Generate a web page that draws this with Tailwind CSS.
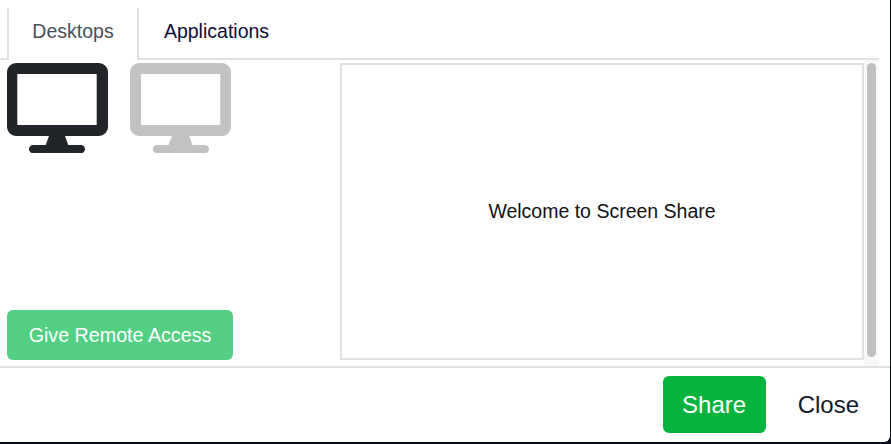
<!DOCTYPE html>
<html lang="en">
<head>
    <meta charset="UTF-8">
    <title>Screen Share</title>
    <script src="https://cdn.jsdelivr.net/npm/@tailwindcss/browser@4"></script>
</head>
<body class="bg-white">
    <div class="w-[891px] h-[444px] overflow-hidden bg-[#0b0d1a]">
        <div class="w-[890px] h-[442px] bg-white rounded-br-[6px] flex flex-col font-['Liberation_Sans',Arial,sans-serif]">

            <!-- Tabs -->
            <div class="h-[60px] pt-2 pl-[7px] w-[879px] flex border-b-2 border-[#dee2e6]">
                <div class="w-[132px] h-[52px] -mb-[2px] pb-[5px] bg-white border-x-2 border-[#dee2e6] flex items-center justify-center text-[19.5px] text-[#495057]">Desktops</div>
                <div class="w-[155px] h-[47px] flex items-center justify-center text-[19.5px] text-[#0b0d3a]">Applications</div>
            </div>

            <!-- Body -->
            <div class="flex h-[308px] border-b-2 border-[#e0e0e0]">
                <div class="w-[333px] ml-[7px] mt-[3px] h-[297px] flex flex-col justify-between">
                    <div class="flex gap-[21px]">
                        <svg class="w-[102px] h-[90px] text-[#212529]" viewBox="0 0 102 90" fill="currentColor">
                            <path fill-rule="evenodd" d="M9 0H92a9 9 0 0 1 9 9V64a9 9 0 0 1-9 9H9a9 9 0 0 1-9-9V9a9 9 0 0 1 9-9ZM10.300 11V62H89.700V11Z"/>
                            <path d="M42 73H58L61.300 82H38.700Z"/>
                            <rect x="22" y="82" width="56" height="8.300" rx="4.150"/>
                        </svg>
                        <svg class="w-[102px] h-[90px] text-[#c2c2c2]" viewBox="0 0 102 90" fill="currentColor">
                            <path fill-rule="evenodd" d="M9 0H92a9 9 0 0 1 9 9V64a9 9 0 0 1-9 9H9a9 9 0 0 1-9-9V9a9 9 0 0 1 9-9ZM11 11V62H90.300V11Z"/>
                            <path d="M42 73H59.300L62.500 82H38.500Z"/>
                            <rect x="22.700" y="82" width="56.300" height="8.300" rx="4.150"/>
                        </svg>
                    </div>
                    <button class="w-[226px] h-[50px] pt-[1px] rounded-[6px] bg-[#53cf84] text-white text-[19.7px]">Give Remote Access</button>
                </div>
                <div class="w-[524px] mt-[3px] h-[297px] border-2 border-[#e0e0e0] flex items-center justify-center text-[19.5px] text-[#111]">Welcome to Screen Share</div>
                <div class="w-[15px] h-[306px] bg-[#f8f8f8] flex justify-center pt-[3px]">
                    <div class="w-[9px] h-[294px] rounded-full bg-[#c1c1c1]"></div>
                </div>
            </div>

            <!-- Footer -->
            <div class="flex items-center justify-end pt-2 pr-[31px] gap-[32px]">
                <button class="w-[103px] h-[57px] rounded-[6px] bg-[#06b33f] text-white text-[24px]">Share</button>
                <button class="h-[57px] text-[24px] text-[#111827]">Close</button>
            </div>
        </div>
    </div>
</body>
</html>
